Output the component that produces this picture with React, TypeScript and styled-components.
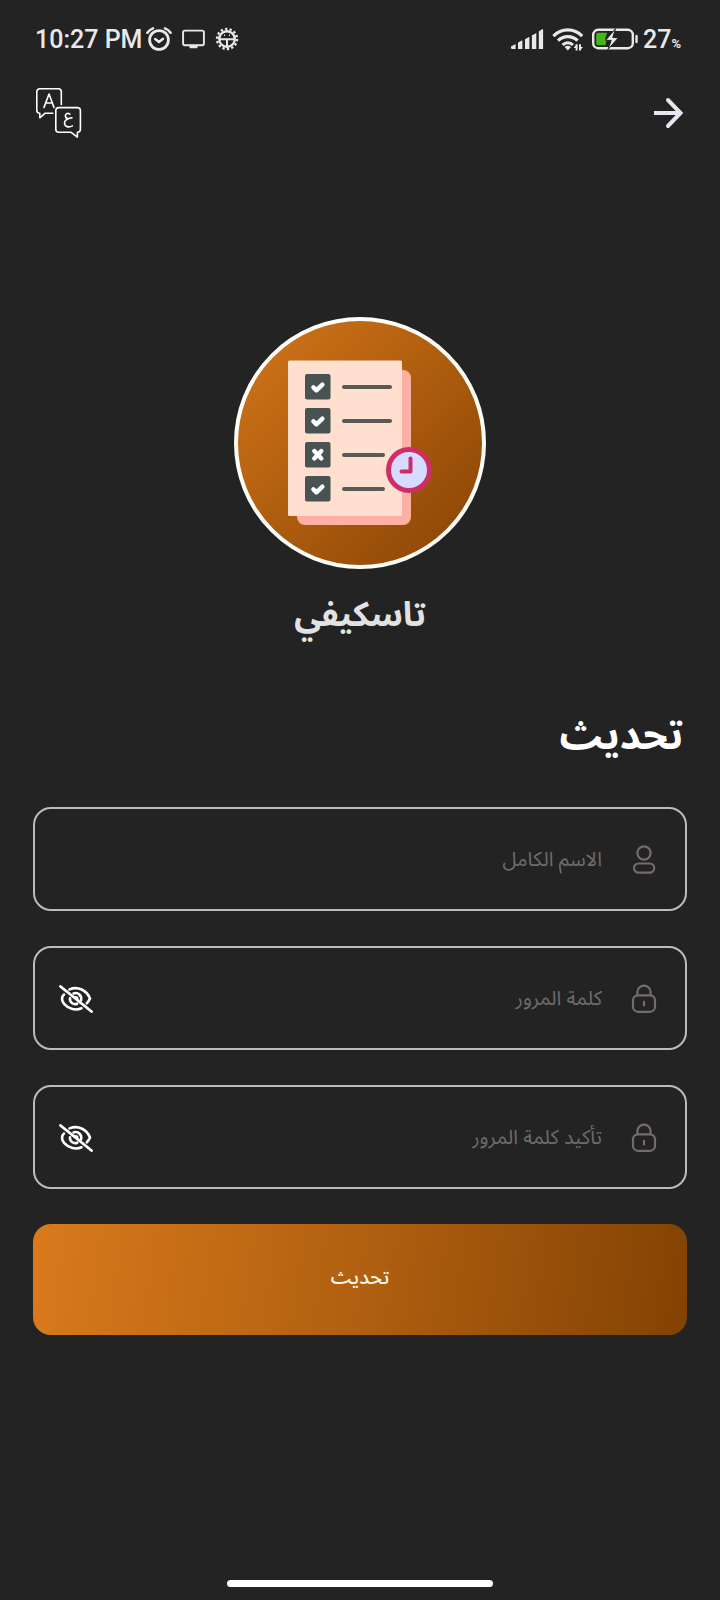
import React, { useState } from "react";
import styled, { createGlobalStyle } from "styled-components";

const GlobalStyle = createGlobalStyle`
  *, *::before, *::after { box-sizing: border-box; }
  html { background: #232323; }
  body {
    margin: 0;
    background: #232323;
    color: #fff;
    font-family: Roboto, "Noto Sans Arabic", "Noto Sans", "DejaVu Sans", sans-serif;
  }
`;

const ARABIC = `"Noto Sans Arabic", "DejaVu Sans", "Noto Sans", sans-serif`;

const Screen = styled.div`
  min-height: 100vh;
  display: flex;
  flex-direction: column;
  background: #232323;
`;

const StatusBar = styled.div`
  display: flex;
  justify-content: space-between;
  align-items: center;
  height: 77px;
  padding: 0 39px 0 35px;
  color: #e9e9e9;
`;

const StatusGroup = styled.div<{ $gap: number }>`
  display: flex;
  align-items: center;
  gap: ${(p) => p.$gap}px;
`;

const Reading = styled.span`
  display: flex;
  align-items: baseline;
  padding-top: 2px;
  font-size: 25px;
  line-height: 28px;
  font-weight: 500;
`;

const Percent = styled.span`
  font-size: 13px;
  line-height: 14px;
  font-weight: 700;
`;

const TopBar = styled.header`
  display: flex;
  justify-content: space-between;
  align-items: center;
  padding: 11px 36px 0;
`;

const IconButton = styled.button`
  display: flex;
  padding: 0;
  border: 0;
  background: none;
  color: inherit;
  cursor: pointer;
`;

const Brand = styled.div`
  display: flex;
  flex-direction: column;
  align-items: center;
  margin-top: 179px;
`;

const Badge = styled.div`
  width: 252px;
  height: 252px;
  border-radius: 50%;
  border: 4px solid #fffdf8;
  background: linear-gradient(135deg, #d4761a 0%, #864303 100%);
  background-origin: border-box;
  overflow: hidden;
  display: flex;
`;

const BrandName = styled.div`
  margin-top: 12px;
  font-family: ${ARABIC};
  font-size: 34px;
  line-height: 68px;
  font-weight: 700;
  color: #e2e2e2;
`;

const Form = styled.form`
  display: flex;
  flex-direction: column;
  padding: 52px 33px 0;
`;

const Heading = styled.h1`
  margin: 0;
  padding: 0 4px 34px;
  font-family: ${ARABIC};
  font-size: 40px;
  line-height: 72px;
  font-weight: 700;
`;

const Fields = styled.div`
  display: flex;
  flex-direction: column;
  gap: 35px;
`;

const Field = styled.label`
  display: flex;
  align-items: center;
  height: 104px;
  padding: 2px 28px 0 24px;
  border: 2px solid #bdbac4;
  border-radius: 18px;
  color: #756b6d;
`;

const Input = styled.input`
  flex: 1;
  min-width: 0;
  margin: 0 29px 0 0;
  padding: 0;
  border: 0;
  outline: 0;
  background: none;
  color: #fff;
  font-family: ${ARABIC};
  font-size: 20px;
  line-height: 32px;
  height: 32px;

  &::placeholder {
    color: #6c6c6c;
    opacity: 1;
  }
`;

const Reveal = styled(IconButton)`
  color: #fff;
`;

const Submit = styled.button`
  margin-top: 35px;
  padding: 0 0 4px;
  height: 111px;
  border: 0;
  border-radius: 18px;
  background: linear-gradient(98deg, #d97a1c 0%, #b06010 50%, #834203 100%);
  color: #fff6e6;
  font-family: ${ARABIC};
  font-size: 20px;
  line-height: 32px;
  font-weight: 500;
  cursor: pointer;
`;

const HomeArea = styled.div`
  display: flex;
  justify-content: center;
  margin-top: auto;
  padding: 24px 0 13px;
`;

const HomeBar = styled.div`
  width: 37%;
  height: 7px;
  border-radius: 4px;
  background: #fff;
`;

const AlarmIcon = () => (
  <svg width="26" height="24" viewBox="0 0 26 24" fill="none" stroke="currentColor" strokeLinecap="round" aria-hidden="true">
    <circle cx="13" cy="13" r="9.4" strokeWidth="2.8" />
    <path d="M9.2 12l3.8 3 4-3.2" strokeWidth="2.5" strokeLinejoin="round" />
    <path d="M1.4 5.8C2.7 3.8 4.6 2.2 7 1.3M24.6 5.8C23.3 3.8 21.4 2.2 19 1.3" strokeWidth="2.5" />
  </svg>
);

const MonitorIcon = () => (
  <svg width="23" height="20" viewBox="0 0 23 20" aria-hidden="true">
    <rect x="1.1" y="1.6" width="20.8" height="14.6" rx="1.6" fill="none" stroke="currentColor" strokeWidth="1.9" />
    <rect x="7.5" y="16.6" width="8" height="2.6" rx="0.8" fill="currentColor" />
  </svg>
);

const GearIcon = () => (
  <svg width="24" height="24" viewBox="0 0 24 24" fill="none" stroke="currentColor" aria-hidden="true">
    <circle cx="12" cy="12" r="7.8" strokeWidth="2.4" />
    <circle cx="12" cy="12" r="10" strokeWidth="2.4" strokeDasharray="2.3 2.188" />
    <path d="M4.5 12.3h15M12 12.3v7.5" strokeWidth="2" />
    <path d="M9 8.3h1M14 8.3h1" strokeWidth="1.4" />
  </svg>
);

const SignalIcon = () => (
  <svg width="34" height="22" viewBox="0 0 34 22" fill="currentColor" aria-hidden="true">
    <path d="M1 18.4l4.6-2.5v5.1H2.2A1.2 1.2 0 0 1 1 19.8z" />
    <path d="M8 14.6l4.4-2.4V21H8z" />
    <path d="M15 11.2l4.4-2.5V21H15z" />
    <path d="M21.9 7.6l4.4-2.5V21h-4.4z" />
    <path d="M28.8 3.4l2.9-2a.9.9 0 0 1 1.4.7V21h-4.3z" />
  </svg>
);

const WifiIcon = () => (
  <svg width="32" height="24" viewBox="0 0 32 24" fill="none" stroke="currentColor" aria-hidden="true">
    <path d="M1.4 9.1C9.4.8 22.2.8 30.2 9.1" strokeWidth="3.2" />
    <path d="M6 13.7c5.4-5.5 14.2-5.5 19.6 0" strokeWidth="3.2" />
    <path d="M10.6 18c2.9-2.9 7.5-2.9 10.4 0" strokeWidth="3" />
    <path d="M12.6 20.1a4.6 4.6 0 0 1 6.4 0L15.8 23.4z" fill="currentColor" stroke="none" />
    <path d="M24.6 23.5v-6.2M28 17.3v6.2" strokeWidth="2" />
    <path d="M24.6 17.3l-3 3.6h3zM28 23.5l3-3.6h-3z" fill="currentColor" stroke="none" />
  </svg>
);

const BatteryIcon = () => (
  <svg width="47" height="22" viewBox="0 0 47 22" aria-hidden="true">
    <rect x="1.2" y="1.8" width="39.6" height="18.4" rx="5" fill="none" stroke="currentColor" strokeWidth="2.4" />
    <path d="M6 4.8h9.2L13 11l1.6 1-1.2 5.2H6a1.8 1.8 0 0 1-1.8-1.8V6.6A1.8 1.8 0 0 1 6 4.8z" fill="#45b51b" />
    <path d="M44.5 8v6" stroke="currentColor" strokeWidth="2.4" strokeLinecap="round" />
    <path d="M23.5.6L13.6 12.4h5.6l-3.3 9.2 10.6-12h-5.7z" fill="currentColor" stroke="#232323" strokeWidth="1" />
  </svg>
);

const LanguageIcon = () => (
  <svg width="46" height="50" viewBox="0 0 46 50" fill="none" stroke="#fff" strokeWidth="1.6" strokeLinecap="round" strokeLinejoin="round" aria-hidden="true">
    <path d="M25.3 16.5V3.8a3 3 0 0 0-3-3H3.8a3 3 0 0 0-3 3v18.4a3 3 0 0 0 3 3v4.6l5.4-4.6h7.6" />
    <path d="M22.8 19.6h18.6a3 3 0 0 1 3 3v18.6a3 3 0 0 1-3 3v5l-6.6-5h-12a3 3 0 0 1-3-3V22.6a3 3 0 0 1 3-3z" />
    <path d="M8 19.4L13 6l5 13.4M9.8 15h6.4" />
    <path d="M33.8 26.2c-2.2-1.8-4.7-.4-4.4 1.9.2 1.5 1.3 2.5 3 2.5l3.6-.9c-4.4.7-7.600 2.600-7.500 5.600.2 3.500 4.300 4.500 7.900 2.600" />
  </svg>
);

const ArrowIcon = () => (
  <svg width="32" height="32" viewBox="0 0 32 32" fill="none" stroke="#e8e6ee" strokeWidth="4" aria-hidden="true">
    <path d="M2 16h26" />
    <path d="M16 3l12.5 13L16 29" strokeLinecap="round" />
  </svg>
);

const UserIcon = () => (
  <svg width="26" height="30" viewBox="0 0 26 30" fill="none" stroke="currentColor" strokeWidth="2.2" aria-hidden="true">
    <circle cx="13" cy="8" r="6.6" />
    <rect x="3" y="18.5" width="20.2" height="9.2" rx="4.6" />
  </svg>
);

const LockIcon = () => (
  <svg width="26" height="30" viewBox="0 0 26 30" fill="none" stroke="currentColor" strokeWidth="2.2" aria-hidden="true">
    <rect x="2" y="11.3" width="22" height="16.5" rx="5" />
    <path d="M6.4 11.3V8.2a6.6 6.6 0 0 1 13.2 0v3.1" />
    <path d="M13 17.8v3.7" strokeLinecap="round" />
  </svg>
);

const EyeOffIcon = () => (
  <svg width="34" height="28" viewBox="0 0 34 28" fill="none" stroke="currentColor" strokeWidth="2.6" strokeLinecap="round" aria-hidden="true">
    <path d="M1.5 1.5L32.5 26.5" strokeWidth="2.8" />
    <path d="M10.5 4.4C19 .8 27.6 5.2 31 13.4c-.8 1.9-1.9 3.5-3.2 4.9" />
    <path d="M5 9.6C2.2 11.8 2.5 16 5.3 19.2c4.4 5 11.5 6.5 17.2 4.1" />
    <path d="M14.6 8.4c4.4-1.5 8.6 2.3 7.4 7" />
    <path d="M11 13.2c-.6 3.8 3.4 7 7.2 5.5" />
    <path d="M16 12.4c1.4-.6 2.5.3 2.3 2" />
  </svg>
);

const TICK = "M8.4 13.4l3 2.9 6-5.6";
const CROSS = "M9.3 9l7 7.4M16.3 9l-7 7.4";

const rows = [
  { y: 53, mark: TICK, end: 152 },
  { y: 87, mark: TICK, end: 152 },
  { y: 121, mark: CROSS, end: 145 },
  { y: 155, mark: TICK, end: 145 },
];

const ChecklistArt = () => (
  <svg width="244" height="244" viewBox="-1 0 244 244" fill="none" role="img" aria-label="تاسكيفي">
    <rect x="58" y="49" width="114" height="155" rx="8" fill="#ffb0a4" />
    <rect x="49" y="39.5" width="114" height="155.5" rx="1.5" fill="#ffdfd0" />
    {rows.map((row) => (
      <g key={row.y}>
        <rect x="66" y={row.y} width="25.5" height="25.5" rx="2" fill="#4a5353" />
        <path d={row.mark} transform={`translate(66 ${row.y})`} stroke="#fff" strokeWidth="4.4" strokeLinecap="round" strokeLinejoin="round" />
        <path d={`M105 ${row.y + 13}H${row.end - 1}`} stroke="#5a5953" strokeWidth="4" strokeLinecap="round" />
      </g>
    ))}
    <circle cx="170" cy="149" r="20.5" fill="#d5dcff" stroke="#ce2d66" strokeWidth="5" />
    <path d="M171.5 137.5v13h-9" stroke="#ce2d66" strokeWidth="4" strokeLinecap="round" strokeLinejoin="round" />
  </svg>
);

function PasswordField({ label }: { label: string }) {
  const [visible, setVisible] = useState(false);
  return (
    <Field>
      <LockIcon />
      <Input type={visible ? "text" : "password"} aria-label={label} placeholder={label} />
      <Reveal type="button" aria-label="إظهار كلمة المرور" onClick={() => setVisible(!visible)}>
        <EyeOffIcon />
      </Reveal>
    </Field>
  );
}

export default function App() {
  return (
    <Screen>
      <GlobalStyle />
      <StatusBar>
        <StatusGroup $gap={4}>
          <Reading as="time">10:27 PM</Reading>
          <StatusGroup $gap={10}>
            <AlarmIcon />
            <MonitorIcon />
            <GearIcon />
          </StatusGroup>
        </StatusGroup>
        <StatusGroup $gap={8}>
          <SignalIcon />
          <WifiIcon />
          <StatusGroup $gap={4}>
            <BatteryIcon />
            <Reading>
              27<Percent>%</Percent>
            </Reading>
          </StatusGroup>
        </StatusGroup>
      </StatusBar>
      <TopBar>
        <IconButton type="button" aria-label="تغيير اللغة">
          <LanguageIcon />
        </IconButton>
        <IconButton type="button" aria-label="رجوع">
          <ArrowIcon />
        </IconButton>
      </TopBar>
      <Brand>
        <Badge>
          <ChecklistArt />
        </Badge>
        <BrandName lang="ar" dir="rtl">تاسكيفي</BrandName>
      </Brand>
      <Form lang="ar" dir="rtl" onSubmit={(e) => e.preventDefault()}>
        <Heading>تحديث</Heading>
        <Fields>
          <Field>
            <UserIcon />
            <Input type="text" aria-label="الاسم الكامل" placeholder="الاسم الكامل" />
          </Field>
          <PasswordField label="كلمة المرور" />
          <PasswordField label="تأكيد كلمة المرور" />
        </Fields>
        <Submit type="submit">تحديث</Submit>
      </Form>
      <HomeArea>
        <HomeBar />
      </HomeArea>
    </Screen>
  );
}
